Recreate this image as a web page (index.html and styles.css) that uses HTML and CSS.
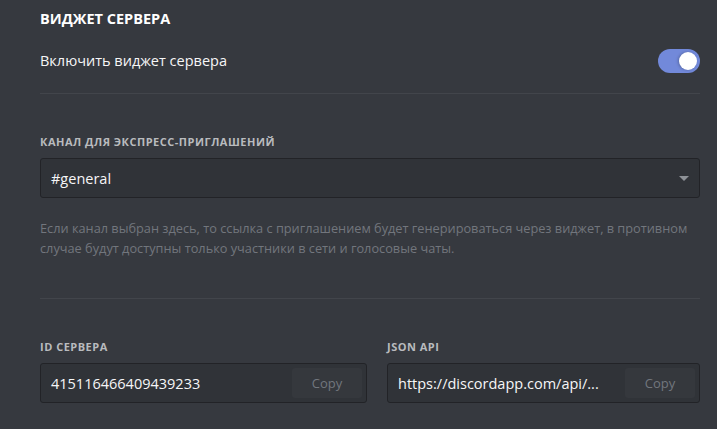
FILE: index.html
```html
<!DOCTYPE html>
<html lang="ru">
<head>
<meta charset="utf-8">
<title>Виджет сервера</title>
<link rel="stylesheet" href="styles.css">
</head>
<body>
<main class="page">
  <h2 class="title">ВИДЖЕТ СЕРВЕРА</h2>
  <div class="toggle-row">
    <span class="toggle-label">Включить виджет сервера</span>
    <span class="switch"><span class="knob"></span></span>
  </div>
  <hr class="divider divider-top">

  <section class="block">
    <h5 class="label">КАНАЛ ДЛЯ ЭКСПРЕСС-ПРИГЛАШЕНИЙ</h5>
    <div class="select">
      <span class="select-value">#general</span>
      <span class="arrow"></span>
    </div>
    <p class="desc">Если канал выбран здесь, то ссылка с приглашением будет генерироваться через виджет, в противном случае будут доступны только участники в сети и голосовые чаты.</p>
  </section>
  <hr class="divider divider-mid">

  <section class="fields">
    <div class="field">
      <h5 class="label">ID СЕРВЕРА</h5>
      <div class="input">
        <span class="input-value">415116466409439233</span>
        <span class="copy">Copy</span>
      </div>
    </div>
    <div class="field">
      <h5 class="label">JSON API</h5>
      <div class="input">
        <span class="input-value">https://discordapp.com/api/...</span>
        <span class="copy">Copy</span>
      </div>
    </div>
  </section>
</main>
</body>
</html>
```

FILE: styles.css
```css
html, body {
  margin: 0;
  padding: 0;
  background: #36393f;
}
body {
  font-family: "Open Sans", "Noto Sans", sans-serif;
  color: #dcddde;
  width: 717px;
  height: 429px;
  overflow: hidden;
}
.page {
  width: 660px;
  padding: 9px 0 0 40px;
}
.title {
  margin: 0;
  font-size: 14.5px;
  line-height: 20px;
  font-weight: 700;
  color: #ffffff;
}
.toggle-row {
  margin-top: 20px;
  height: 24px;
  display: flex;
  align-items: center;
  justify-content: space-between;
}
.toggle-label {
  font-size: 14.5px;
  line-height: 20px;
  color: #f6f6f7;
}
.switch {
  width: 42px;
  height: 24px;
  border-radius: 12px;
  background: #7289da;
  display: flex;
  align-items: center;
  justify-content: flex-end;
  padding-right: 3px;
  box-sizing: border-box;
}
.knob {
  width: 18px;
  height: 18px;
  border-radius: 50%;
  background: #ffffff;
  box-shadow: -1px 0 3px rgba(0, 0, 0, 0.25);
}
.divider {
  margin: 0;
  border: 0;
  height: 1px;
  background: #42454b;
}
.divider-top {
  margin-top: 20px;
}
.block {
  padding-top: 40px;
}
.label {
  margin: 0 0 8px;
  font-size: 11px;
  line-height: 16px;
  font-weight: 700;
  color: #b9bbbe;
  letter-spacing: 0.5px;
}
.select {
  height: 40px;
  box-sizing: border-box;
  border: 1px solid #222327;
  border-radius: 3px;
  background: #303338;
  display: flex;
  align-items: center;
  justify-content: space-between;
  padding: 0 10px;
}
.select-value {
  font-size: 14.5px;
  color: #f6f6f7;
}
.arrow {
  width: 0;
  height: 0;
  border-left: 5px solid transparent;
  border-right: 5px solid transparent;
  border-top: 5px solid #8e9297;
  margin-right: 0;
}
.desc {
  margin: 20px 0 0;
  font-size: 12.75px;
  line-height: 20px;
  color: #72767d;
}
.divider-mid {
  margin-top: 40px;
}
.fields {
  padding-top: 40px;
  display: grid;
  grid-template-columns: 327px 313px;
  column-gap: 20px;
}
.input {
  height: 40px;
  box-sizing: border-box;
  border: 1px solid #222327;
  border-radius: 3px;
  background: #303338;
  display: flex;
  align-items: center;
  justify-content: space-between;
  padding: 0 4px 0 10px;
}
.input-value {
  font-size: 14.5px;
  color: #f6f6f7;
  white-space: nowrap;
}
.copy {
  width: 70px;
  height: 30px;
  border-radius: 3px;
  background: #35383d;
  color: #72767d;
  font-size: 13px;
  display: flex;
  align-items: center;
  justify-content: center;
}
```
